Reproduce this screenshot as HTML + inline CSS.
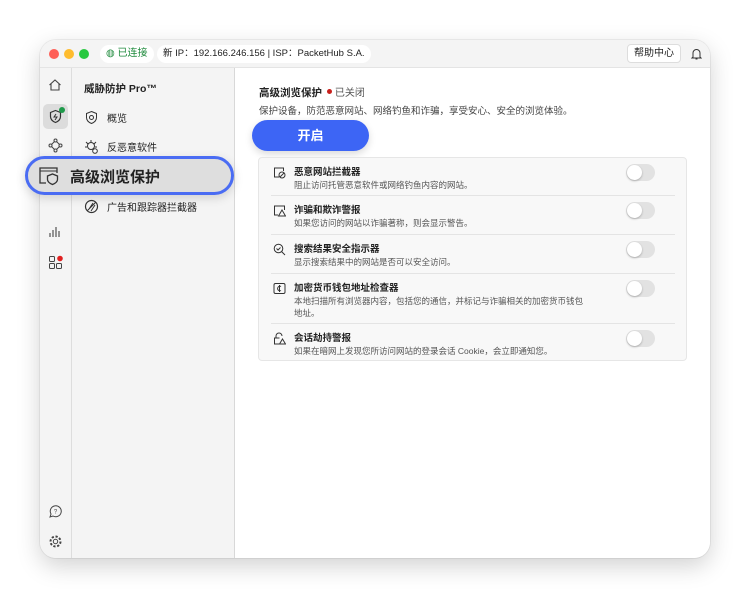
<!DOCTYPE html>
<html><head><meta charset="utf-8"><style>
*{margin:0;padding:0;box-sizing:border-box}
body{width:750px;height:600px;background:#fff;font-family:"Liberation Sans","Noto Sans CJK SC",sans-serif;position:relative;overflow:hidden;color:#222}
.win{position:absolute;left:40px;top:40px;width:670px;height:518px;border-radius:16px;background:#fff;box-shadow:0 8px 24px rgba(0,0,0,.18),0 0 0 1px rgba(0,0,0,.06);overflow:hidden}
.tb{position:absolute;left:0;top:0;width:670px;height:28px;background:#f4f4f4;border-bottom:1px solid #e4e4e4}
.dot{position:absolute;top:9px;width:10px;height:10px;border-radius:50%}
.pill{position:absolute;top:5px;height:18px;background:#fff;border-radius:9px;font-size:10px;line-height:18px;padding:0 6px;white-space:nowrap}
.rail{position:absolute;left:0;top:28px;width:32px;height:490px;background:#f4f4f4;border-right:1px solid #ddd}
.side{position:absolute;left:32px;top:28px;width:163px;height:490px;background:#f4f4f4;border-right:1px solid #d8d8d8}
.main{position:absolute;left:195px;top:28px;width:475px;height:490px;background:#fff}
.si{position:absolute;left:12px;font-size:10px;display:flex;align-items:center;gap:8px}
.ri{position:absolute;left:8px}
.card{position:absolute;left:23px;top:89px;width:429px;height:204px;background:#f8f8f8;border:1px solid #e6e6e6;border-radius:4px}
.row{position:absolute;left:12px;width:404px;border-bottom:1px solid #e4e4e4}
.row:last-child{border-bottom:none}
.row b{position:absolute;left:23px;top:6px;font-size:9.5px;font-weight:bold}
.row span{position:absolute;left:23px;top:21px;font-size:8.5px;color:#555;line-height:12px;width:292px}
.row svg{position:absolute;left:2px;top:8px}
.tg{position:absolute;right:20px;top:6px;width:29px;height:17px;border-radius:9px;background:#e2e2e2}
.tg:after{content:"";position:absolute;left:1px;top:1px;width:15px;height:15px;border-radius:50%;background:#fff;box-shadow:0 1px 2px rgba(0,0,0,.25)}
</style></head><body>
<div class="win">
 <div class="tb">
  <div class="dot" style="left:9px;background:#fe5f57"></div>
  <div class="dot" style="left:24px;background:#febc2e"></div>
  <div class="dot" style="left:39px;background:#28c840"></div>
  <div class="pill" style="left:60px;color:#1e8a3c">◍ 已连接</div>
  <div class="pill" style="left:117px;font-size:9.5px">新 IP：192.166.246.156 | ISP：PacketHub S.A.</div>
  <div style="position:absolute;left:587px;top:4px;height:19px;width:54px;background:#fff;border:1px solid #ddd;border-radius:4px;font-size:10px;line-height:17px;text-align:center">帮助中心</div>
  <svg style="position:absolute;left:651px;top:8px" width="11" height="12" viewBox="0 0 11 12"><path d="M2 9V5a3.5 3.5 0 017 0v4l1 1H1z M4.5 11h2" fill="none" stroke="#333" stroke-width="1"/></svg>
 </div>
 <div class="rail">
  <svg class="ri" style="top:10px" width="14" height="14" viewBox="0 0 14 14"><path d="M1.5 7L7 2l5.5 5M3 6v6h8V6" fill="none" stroke="#444" stroke-width="1.1"/></svg>
  <div style="position:absolute;left:3px;top:36px;width:25px;height:25px;background:#dcdcdc;border-radius:5px"></div>
  <svg class="ri" style="left:8px;top:41px" width="15" height="15" viewBox="0 0 15 15"><path d="M7.5 1.5l5 2v4c0 3-2.5 5-5 6-2.5-1-5-3-5-6v-4z" fill="none" stroke="#333" stroke-width="1.2"/><path d="M8 5l-2 3h3l-2 3" fill="none" stroke="#333" stroke-width="1"/></svg>
  <div style="position:absolute;left:19px;top:39px;width:6px;height:6px;border-radius:50%;background:#1e9a4a"></div>
  <svg class="ri" style="top:70px" width="15" height="15" viewBox="0 0 15 15"><g fill="none" stroke="#444"><circle cx="7.5" cy="2.5" r="1.5"/><circle cx="2.5" cy="7.5" r="1.5"/><circle cx="12.5" cy="7.5" r="1.5"/><circle cx="7.5" cy="12.5" r="1.5"/><path d="M6.5 3.5l-3 3M8.5 3.5l3 3M3.5 8.5l3 3M11.5 8.5l-3 3"/></g></svg>
  <svg class="ri" style="top:156px" width="14" height="14" viewBox="0 0 14 14"><path d="M2 13V9M5 13V6M8 13V3M11 13V7" stroke="#444" stroke-width="1.1"/></svg>
  <svg class="ri" style="top:187px" width="15" height="15" viewBox="0 0 15 15"><g fill="none" stroke="#444"><rect x="1.5" y="1.5" width="5" height="5" rx="1"/><rect x="1.5" y="8.5" width="5" height="5" rx="1"/><rect x="8.5" y="8.5" width="5" height="5" rx="1"/></g><circle cx="12" cy="3.5" r="2.8" fill="#e02020"/></svg>
  <svg class="ri" style="top:436px" width="15" height="15" viewBox="0 0 15 15"><path d="M2 13l1-3a5.5 5.5 0 112 2z" fill="none" stroke="#444"/><text x="7.5" y="9.5" font-size="6" text-anchor="middle" fill="#444" font-family="Liberation Sans">?</text></svg>
  <svg class="ri" style="top:466px" width="15" height="15" viewBox="0 0 15 15"><circle cx="7.5" cy="7.5" r="2.2" fill="none" stroke="#444"/><circle cx="7.5" cy="7.5" r="5" fill="none" stroke="#444" stroke-dasharray="2.2 1.7" stroke-width="2"/></svg>
 </div>
 <div class="side">
  <div style="position:absolute;left:12px;top:13px;font-size:10.5px;font-weight:bold">威胁防护 Pro™</div>
  <div class="si" style="top:42px"><svg width="15" height="15" viewBox="0 0 15 15"><path d="M7.5 1.5l5 2v4c0 3-2.5 5-5 6-2.5-1-5-3-5-6v-4z" fill="none" stroke="#333"/><circle cx="7.5" cy="7.5" r="2" fill="none" stroke="#333"/></svg>概览</div>
  <div class="si" style="top:71px"><svg width="15" height="15" viewBox="0 0 15 15"><circle cx="7" cy="7" r="3.5" fill="none" stroke="#333"/><path d="M7 1v2M2 3l2 2M12 3l-2 2M1 8h2M11 8h2" stroke="#333"/><circle cx="11" cy="12" r="2.3" fill="#fff" stroke="#333"/></svg>反恶意软件</div>
  <div class="si" style="top:131px"><svg width="15" height="15" viewBox="0 0 15 15"><circle cx="7.5" cy="7.5" r="6" fill="none" stroke="#333" stroke-width="1.2"/><path d="M3 12L12 3M5 10l4-6M7 12l4-6" stroke="#333"/></svg>广告和跟踪器拦截器</div>
 </div>
 <div class="main">
  <div style="position:absolute;left:24px;top:16px;font-size:10.5px;font-weight:bold">高级浏览保护 <span style="display:inline-block;width:5px;height:5px;border-radius:50%;background:#c8201c;vertical-align:2px;margin-left:2px"></span> <span style="font-weight:normal;color:#555;font-size:10px">已关闭</span></div>
  <div style="position:absolute;left:24px;top:35px;font-size:9.5px;color:#444">保护设备，防范恶意网站、网络钓鱼和诈骗，享受安心、安全的浏览体验。</div>
  <div style="position:absolute;left:17px;top:52px;width:117px;height:31px;border-radius:16px;background:#3d65f5;color:#fff;font-size:13px;font-weight:bold;text-align:center;line-height:31px;box-shadow:0 3px 8px rgba(0,0,0,.15)">开启</div>
  <div class="card">
   <div class="row" style="top:0;height:38px"><svg width="13" height="13" viewBox="0 0 13 13"><path d="M6 11H1.5V2h9v3" fill="none" stroke="#333"/><circle cx="9" cy="9" r="3" fill="none" stroke="#333"/><path d="M7 11l4-4" stroke="#333"/></svg><b>恶意网站拦截器</b><span>阻止访问托管恶意软件或网络钓鱼内容的网站。</span><div class="tg"></div></div>
   <div class="row" style="top:38px;height:39px"><svg width="13" height="13" viewBox="0 0 13 13"><path d="M5 11H1.5V2h10v4" fill="none" stroke="#333"/><path d="M9 6l3.5 6h-7z" fill="none" stroke="#333"/></svg><b>诈骗和欺诈警报</b><span>如果您访问的网站以诈骗著称，则会显示警告。</span><div class="tg"></div></div>
   <div class="row" style="top:77px;height:39px"><svg width="13" height="13" viewBox="0 0 13 13"><circle cx="5.5" cy="5.5" r="4.3" fill="none" stroke="#333"/><path d="M3.5 5.5l1.5 1.5 2.5-2.5M8.5 8.5l3.5 3.5" fill="none" stroke="#333"/></svg><b>搜索结果安全指示器</b><span>显示搜索结果中的网站是否可以安全访问。</span><div class="tg"></div></div>
   <div class="row" style="top:116px;height:50px"><svg width="13" height="13" viewBox="0 0 13 13"><rect x="1" y="1.5" width="11" height="10" rx="1.5" fill="none" stroke="#333"/><path d="M8 4.5a2.3 2.3 0 100 4M6.5 3v7" fill="none" stroke="#333"/></svg><b>加密货币钱包地址检查器</b><span>本地扫描所有浏览器内容，包括您的通信，并标记与诈骗相关的加密货币钱包地址。</span><div class="tg"></div></div>
   <div class="row" style="top:166px;height:38px"><svg width="13" height="13" viewBox="0 0 13 13"><path d="M3 6V4a3 3 0 016 0" fill="none" stroke="#333"/><path d="M6 12H1.5V6h5" fill="none" stroke="#333"/><path d="M9.5 7l3 5h-6z" fill="none" stroke="#333"/></svg><b>会话劫持警报</b><span>如果在暗网上发现您所访问网站的登录会话 Cookie，会立即通知您。</span><div class="tg"></div></div>
  </div>
 </div>
</div>
<div style="position:absolute;left:25px;top:156px;width:209px;height:39px;border-radius:20px;background:#dedede;border:3px solid #4a6cf3;box-shadow:0 3px 10px rgba(0,0,0,.15)">
 <svg style="position:absolute;left:10px;top:7px" width="22" height="20" viewBox="0 0 22 20"><path d="M8 17H2V2h17v5" fill="none" stroke="#333" stroke-width="1.3"/><path d="M2 5h17" stroke="#333" stroke-width="1.1"/><path d="M14.5 8l5 2v3.5c0 2.5-2.5 4-5 5-2.5-1-5-2.5-5-5V10z" fill="#dedede" stroke="#333" stroke-width="1.3"/></svg>
 <div style="position:absolute;left:42px;top:7px;font-size:15px;font-weight:bold;color:#222">高级浏览保护</div>
</div>
</body></html>
